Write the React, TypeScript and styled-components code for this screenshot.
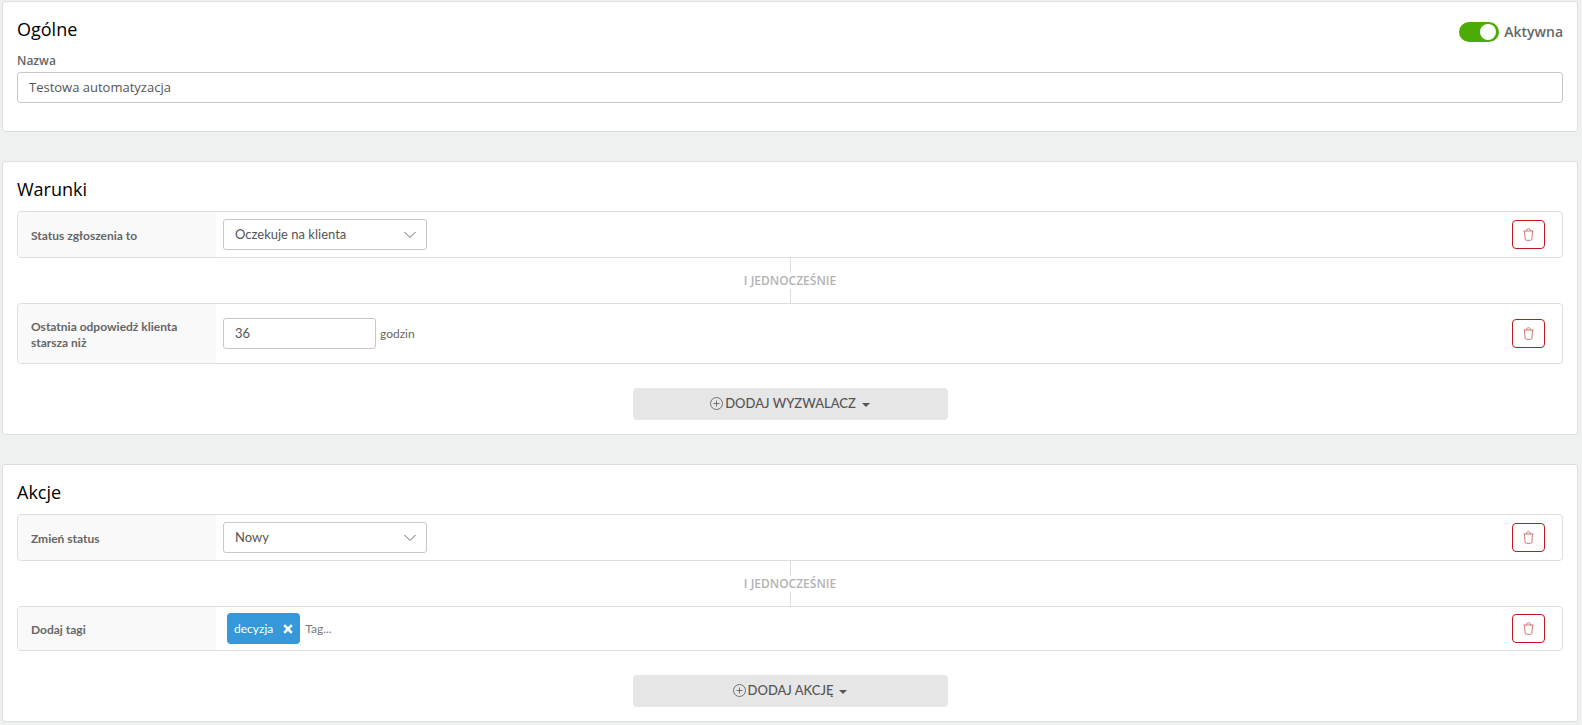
import React, { useState } from "react";
import styled, { createGlobalStyle } from "styled-components";

const GlobalStyle = createGlobalStyle`
  * { box-sizing: border-box; }
  body {
    margin: 0;
    background: #eff1f1;
    color: #666;
    font-family: Lato, "Liberation Sans", sans-serif;
    font-size: 12px;
    line-height: 16px;
  }
  button, input, select { font: inherit; color: inherit; margin: 0; }
`;

const openSans = `"Open Sans", "Liberation Sans", sans-serif`;

const Page = styled.main`
  display: flex;
  flex-direction: column;
  gap: 29px;
  padding: 1px 4px 2px 2px;
`;

const Card = styled.section`
  padding: 14px;
  border: 1px solid #dcdfdf;
  border-radius: 3px;
  background: #fff;
`;

const GeneralCard = styled(Card)`
  padding-bottom: 28px;
`;

const CardHeader = styled.header`
  display: flex;
  justify-content: space-between;
  align-items: flex-start;
  height: 35px;
  padding-top: 1px;
`;

const Title = styled.h2`
  margin: 0;
  color: #000;
  font-family: ${openSans};
  font-size: 18px;
  font-weight: 400;
  line-height: 24px;
`;

const Toggle = styled.label`
  display: flex;
  align-items: center;
  gap: 5px;
  padding-top: 5px;
  font-family: ${openSans};
  font-size: 14px;
  font-weight: 600;
  line-height: 20px;
  cursor: pointer;
`;

const Switch = styled.input`
  appearance: none;
  display: flex;
  align-items: center;
  width: 40px;
  height: 20px;
  padding: 0 3px;
  border-radius: 10px;
  background: #bbb;
  cursor: pointer;

  &::before {
    content: "";
    width: 16px;
    height: 16px;
    border-radius: 50%;
    background: #fff;
  }
  &:checked {
    justify-content: flex-end;
    background: #4cab04;
  }
`;

const FieldLabel = styled.label`
  display: block;
  padding: 2px 0 3px;
  font-family: ${openSans};
  font-size: 12px;
  font-weight: 600;
`;

const TextInput = styled.input<{ $width?: string; $sans?: boolean }>`
  display: block;
  width: ${(p) => p.$width ?? "100%"};
  height: 31px;
  padding: 0 11px 2px;
  border: 1px solid #c8c8c8;
  border-radius: 3px;
  background: #fff;
  color: #555;
  font-family: ${(p) => (p.$sans ? openSans : "inherit")};
  font-size: 13px;
  outline: none;
`;

const Row = styled.div`
  display: flex;
  border: 1px solid #dcdfdf;
  border-radius: 4px;
`;

const RowLabel = styled.label`
  display: flex;
  align-items: center;
  flex: 0 0 198px;
  padding: 2px 13px 0;
  border-radius: 3px 0 0 3px;
  background: #f9f9f9;
  font-weight: 700;
`;

const RowContent = styled.div<{ $tall?: boolean; $compact?: boolean }>`
  display: flex;
  flex: 1;
  align-items: center;
  gap: 4px;
  min-width: 0;
  padding: ${(p) => (p.$tall ? "14px 7px" : p.$compact ? "6px 11px" : "7px")};
`;

const SelectBox = styled.div`
  display: grid;
  width: 204px;
  align-items: center;

  > * { grid-area: 1 / 1; }
  > svg { justify-self: end; margin-right: 11px; pointer-events: none; }
`;

const Select = styled.select`
  appearance: none;
  width: 100%;
  height: 31px;
  padding: 0 32px 2px 11px;
  border: 1px solid #c8c8c8;
  border-radius: 3px;
  background: #fff;
  color: #555;
  font-size: 13px;
`;

const DeleteButton = styled.button`
  display: flex;
  align-items: center;
  justify-content: center;
  align-self: center;
  width: 33px;
  height: 29px;
  margin-right: 17px;
  padding: 0;
  border: 1px solid #bf1622;
  border-radius: 4px;
  background: #fff;
  color: #c97b76;
  cursor: pointer;
`;

const Connector = styled.div`
  display: flex;
  flex-direction: column;
  align-items: center;
  height: 45px;
  color: #b3b3b3;
  font-family: ${openSans};
  font-weight: 600;

  &::before, &::after {
    content: "";
    flex: 1;
    width: 1px;
    background: #dcdfdf;
  }
`;

const AddButton = styled.button`
  display: flex;
  align-items: center;
  justify-content: center;
  width: 315px;
  height: 32px;
  margin: 24px auto 0;
  padding: 0 0 2px;
  border: 0;
  border-radius: 4px;
  background: #e6e6e6;
  color: #555;
  font-size: 13px;
  font-weight: 500;
  cursor: pointer;

  > svg:first-child { margin-right: 2px; }
`;

const Caret = styled.span`
  margin: 4px 0 0 6px;
  border: 4px solid transparent;
  border-top-color: currentColor;
  border-bottom: 0;
`;

const Tag = styled.span`
  display: flex;
  align-items: center;
  gap: 10px;
  height: 31px;
  padding: 0 7px;
  border-radius: 4px;
  background: #3498db;
  color: #fff;
`;

const TagRemove = styled.button`
  display: flex;
  padding: 0;
  border: 0;
  background: none;
  cursor: pointer;
`;

const TagInput = styled.input`
  flex: 1;
  min-width: 0;
  height: 31px;
  padding: 0 1px;
  border: 0;
  background: none;
  outline: none;
  &::placeholder { color: #777; opacity: 1; }
`;

const TrashIcon = () => (
  <svg width="11" height="13" viewBox="0 0 11 13" fill="none" stroke="currentColor" aria-hidden="true">
    <path d="M.5 3h10M3.500 3C3.600 1.200 4.400.7 5.500.7S7.400 1.200 7.500 3M1.500 3l.6 8c.1.9.5 1.300 1.300 1.300h4.200c.8 0 1.200-.4 1.300-1.300l.6-8" />
  </svg>
);

const ChevronIcon = () => (
  <svg width="12" height="8" viewBox="0 0 12 8" fill="none" stroke="#666" aria-hidden="true">
    <path d="M.5 1 6 6.500 11.500 1" />
  </svg>
);

const PlusCircleIcon = () => (
  <svg width="13" height="13" viewBox="0 0 13 13" fill="none" stroke="currentColor" strokeWidth=".8" aria-hidden="true">
    <circle cx="6.5" cy="6.5" r="6" />
    <path d="M6.500 3.500v6M3.500 6.500h6" />
  </svg>
);

const CrossIcon = () => (
  <svg width="10" height="10" viewBox="0 0 10 10" stroke="#fff" strokeWidth="2.6" aria-hidden="true">
    <path d="m1.200 1.200 7.600 7.600M8.800 1.200 1.200 8.800" />
  </svg>
);

const Delete = () => (
  <DeleteButton type="button" aria-label="Usuń">
    <TrashIcon />
  </DeleteButton>
);

function StatusSelect({ id, options }: { id: string; options: string[] }) {
  return (
    <SelectBox>
      <Select id={id}>
        {options.map((o) => (
          <option key={o}>{o}</option>
        ))}
      </Select>
      <ChevronIcon />
    </SelectBox>
  );
}

function Rule(props: {
  id: string;
  label: string;
  tall?: boolean;
  compact?: boolean;
  children: React.ReactNode;
}) {
  return (
    <Row>
      <RowLabel htmlFor={props.id}>{props.label}</RowLabel>
      <RowContent $tall={props.tall} $compact={props.compact}>
        {props.children}
      </RowContent>
      <Delete />
    </Row>
  );
}

export default function App() {
  const [active, setActive] = useState(true);
  return (
    <>
      <GlobalStyle />
      <Page>
        <GeneralCard>
          <CardHeader>
            <Title>Ogólne</Title>
            <Toggle>
              <Switch
                type="checkbox"
                role="switch"
                checked={active}
                onChange={(e) => setActive(e.target.checked)}
              />
              Aktywna
            </Toggle>
          </CardHeader>
          <FieldLabel htmlFor="name">Nazwa</FieldLabel>
          <TextInput id="name" $sans defaultValue="Testowa automatyzacja" />
        </GeneralCard>

        <Card>
          <CardHeader>
            <Title>Warunki</Title>
          </CardHeader>
          <Rule id="ticket-status" label="Status zgłoszenia to">
            <StatusSelect id="ticket-status" options={["Oczekuje na klienta", "Nowy"]} />
          </Rule>
          <Connector>I JEDNOCZEŚNIE</Connector>
          <Rule id="reply-age" label="Ostatnia odpowiedź klienta starsza niż" tall>
            <TextInput id="reply-age" $width="153px" defaultValue="36" />
            godzin
          </Rule>
          <AddButton type="button">
            <PlusCircleIcon />
            DODAJ WYZWALACZ
            <Caret />
          </AddButton>
        </Card>

        <Card>
          <CardHeader>
            <Title>Akcje</Title>
          </CardHeader>
          <Rule id="new-status" label="Zmień status">
            <StatusSelect id="new-status" options={["Nowy", "Oczekuje na klienta"]} />
          </Rule>
          <Connector>I JEDNOCZEŚNIE</Connector>
          <Rule id="tags" label="Dodaj tagi" compact>
            <Tag>
              decyzja
              <TagRemove type="button" aria-label="Usuń tag decyzja">
                <CrossIcon />
              </TagRemove>
            </Tag>
            <TagInput id="tags" placeholder="Tag..." />
          </Rule>
          <AddButton type="button">
            <PlusCircleIcon />
            DODAJ AKCJĘ
            <Caret />
          </AddButton>
        </Card>
      </Page>
    </>
  );
}
